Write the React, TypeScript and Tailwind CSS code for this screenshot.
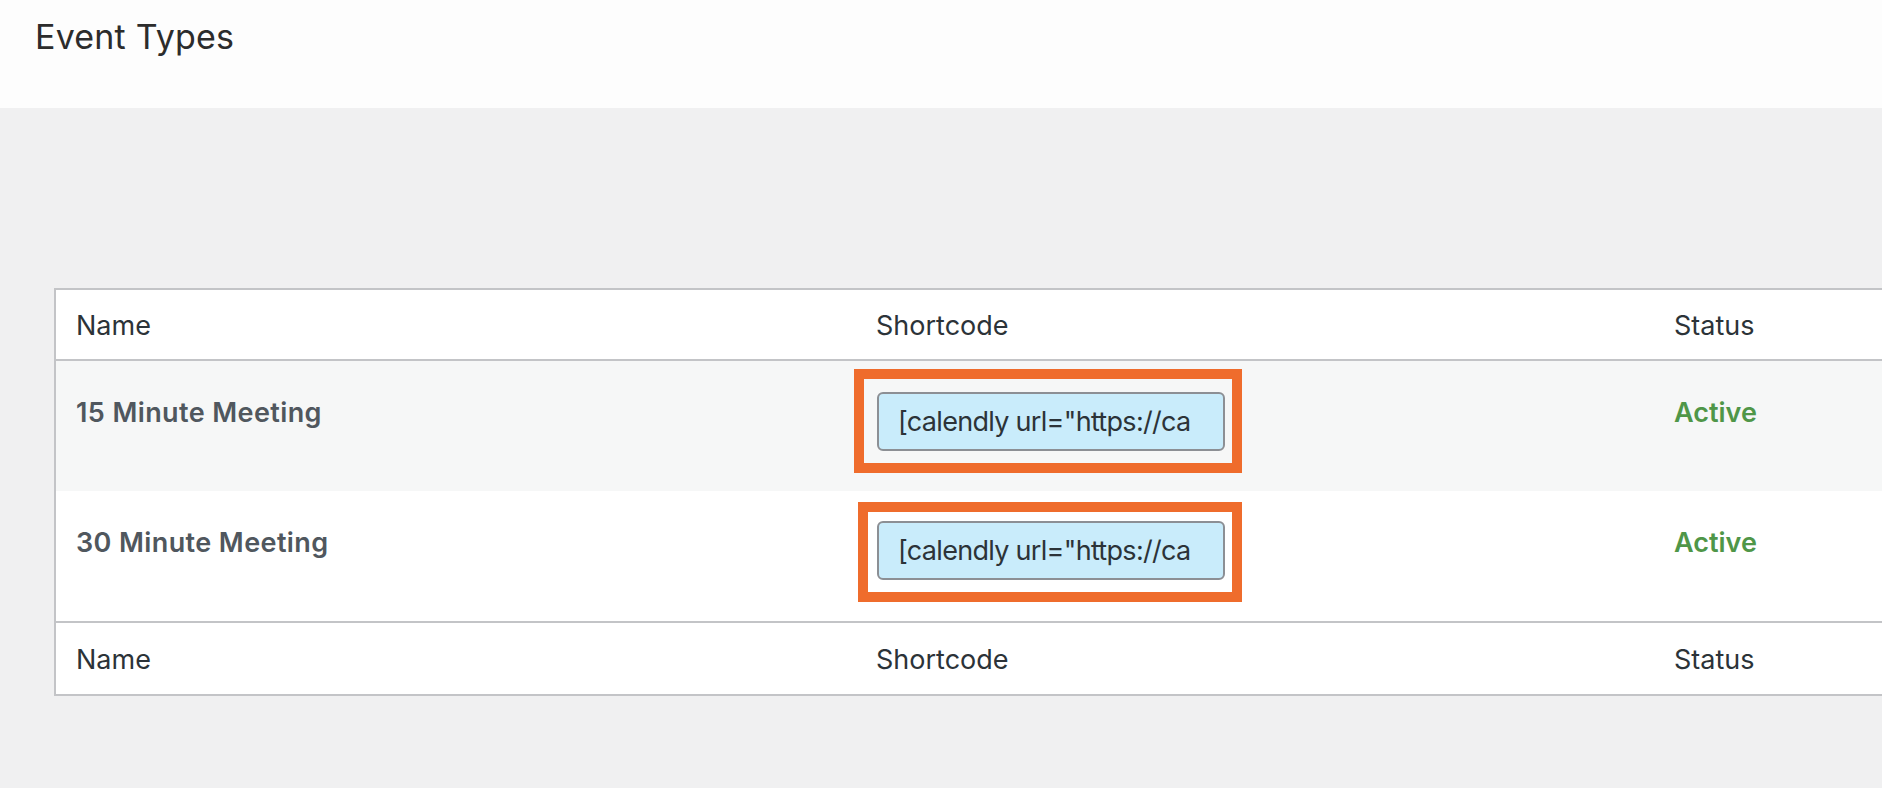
import React from "react";

type EventRow = { name: string; shortcode: string; status: string; box: string };

const rows: EventRow[] = [
  {
    name: "15 Minute Meeting",
    shortcode: '[calendly url="https://calendly.com/demo/15min"]',
    status: "Active",
    box: "mt-[8px] ml-0 pl-[13px] pt-[13px] pr-[7px] pb-[12px]",
  },
  {
    name: "30 Minute Meeting",
    shortcode: '[calendly url="https://calendly.com/demo/30min"]',
    status: "Active",
    box: "mt-[11px] ml-[4px] pl-[9px] pt-[9px] pr-[7px] pb-[12px]",
  },
];

const cols = "grid grid-cols-[798px_798px_1fr]";

// the field only has room for the start of the shortcode
const visible = (code: string) => code.slice(0, 25);

function HeadRow({ className }: { className: string }) {
  return (
    <div className={`${cols} bg-white text-[27px] leading-[36px] text-[#2c3338] ${className}`}>
      <div className="pl-[20px]">Name</div>
      <div className="pl-[22px]">Shortcode</div>
      <div className="pl-[22px]">Status</div>
    </div>
  );
}

export default function App() {
  return (
    <div
      className="w-[1882px] h-[788px] overflow-hidden bg-[#f0f0f1]"
      style={{ fontFamily: "Inter, 'Noto Sans', sans-serif" }}
    >
      <header className="h-[108px] bg-[#fdfdfd] pl-[35px] pt-[19px]">
        <h1 className="text-[34px] leading-[35px] font-normal tracking-[0.2px] text-[#2c2c2c]">Event Types</h1>
      </header>

      <section className="pt-[180px] pl-[54px]">
        <div className="w-[1900px] border-2 border-[#c3c4c7] bg-white">
          <HeadRow className="h-[71px] pt-[18px] border-b-2 border-[#c3c4c7]" />

          {rows.map((row, i) => (
            <div key={row.name} className={`${cols} h-[130px] ${i % 2 == 0 ? "bg-[#f6f7f7]" : "bg-white"}`}>
              <div className="pl-[20px] pt-[34px] text-[27px] leading-[36px] font-semibold tracking-[0.4px] text-[#50575e]">
                {row.name}
              </div>
              <div>
                <div className={`w-fit border-[10px] border-[#ef6c2c] ${row.box}`}>
                  <div
                    title={row.shortcode}
                    className="flex items-center w-[348px] h-[59px] rounded-[6px] border-2 border-[#8c8f94] bg-[#c9ecfb] pl-[19px] whitespace-nowrap text-[27px] leading-[36px] tracking-[-0.7px] text-[#2c3338]"
                  >
                    {visible(row.shortcode)}
                  </div>
                </div>
              </div>
              <div className="pl-[22px] pt-[34px] text-[27px] leading-[36px] font-semibold text-[#4f9648]">
                {row.status}
              </div>
            </div>
          ))}

          <HeadRow className="h-[73px] pt-[19px] border-t-2 border-[#c3c4c7]" />
        </div>
      </section>
    </div>
  );
}
